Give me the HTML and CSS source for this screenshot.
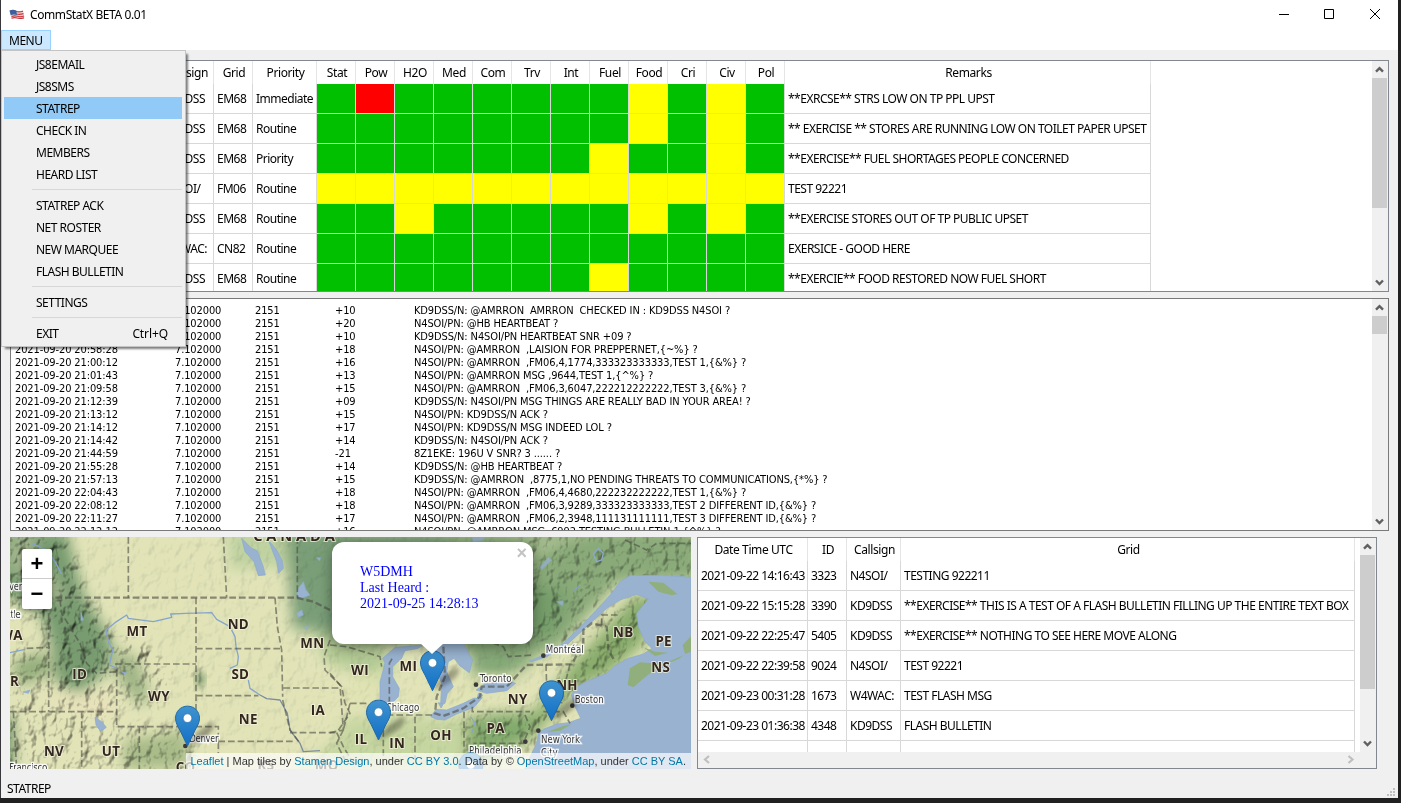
FILE: index.html
```html
<!DOCTYPE html>
<html lang="en">
<head>
<meta charset="utf-8">
<title>CommStatX BETA 0.01</title>
<link rel="stylesheet" href="styles.css">
</head>
<body>
<svg width="0" height="0" class="defs" aria-hidden="true">
  <defs>
    <symbol id="up" viewBox="0 0 17 17"><path d="M5 10.700 8.500 7.200l3.500 3.500" fill="none" stroke="currentColor" stroke-width="2.400"/></symbol>
    <symbol id="down" viewBox="0 0 17 17"><path d="M5 6.500 8.500 10 12 6.500" fill="none" stroke="currentColor" stroke-width="2.400"/></symbol>
    <symbol id="left" viewBox="0 0 17 17"><path d="M11 4 7 7.500 11 11" fill="none" stroke="currentColor" stroke-width="2.200"/></symbol>
    <symbol id="right" viewBox="0 0 17 17"><path d="M6.500 4l4 3.500-4 3.500" fill="none" stroke="currentColor" stroke-width="2.200"/></symbol>
  </defs>
</svg>
<div class="window">
  <header class="titlebar">
    <svg class="flag" viewBox="0 0 16 12" width="16" height="12">
      <path d="M.5 1.500Q4 .2 7.500 1.500T14 1l1.500 7.500Q12 10 8.500 9T2.500 9.500Z" fill="#ecd6d6"/>
      <path d="M7 2.500q3 1 7-.3M7.500 5q3 .8 7-.3M2.500 7.500q3-1.200 6-.2t6.500-.3M2.500 9.200q3-1 5.500-.2t7-.2" stroke="#c8363a" stroke-width="1.200" fill="none"/>
      <path d="M.5 1.500Q4 .2 7.300 1.500L8 6Q4.500 5 1.700 6.200Z" fill="#3e5f9c"/>
    </svg>
    <span class="title">CommStatX BETA 0.01</span>
    <svg class="winbtns" width="120" height="30" viewBox="0 0 120 30" fill="none" stroke="#000">
      <path d="M9 14.500h10M54.500 9.500h9v9h-9zM100 9l10 10M110 9l-10 10"/>
    </svg>
  </header>
  <nav class="menubar"><span class="menutab">MENU</span>
    <div class="menu">
      <div class="item">JS8EMAIL</div><div class="item">JS8SMS</div><div class="item on">STATREP</div><div class="item">CHECK IN</div><div class="item">MEMBERS</div><div class="item">HEARD LIST</div>
      <hr>
      <div class="item">STATREP ACK</div><div class="item">NET ROSTER</div><div class="item">NEW MARQUEE</div><div class="item">FLASH BULLETIN</div>
      <hr>
      <div class="item">SETTINGS</div>
      <hr>
      <div class="item"><span>EXIT</span><span class="key">Ctrl+Q</span></div>
    </div>
  </nav>
  <main class="body">
    <section class="panel status">
      <div class="view">
        <table class="grid statgrid">
          <colgroup><col class="c110"><col class="c39"><col class="c54"><col class="c39"><col class="c64"><col class="c39" span="12"><col class="c366"></colgroup>
          <thead><tr><th></th><th></th><th>Callsign</th><th>Grid</th><th>Priority</th><th>Stat</th><th>Pow</th><th>H2O</th><th>Med</th><th>Com</th><th>Trv</th><th>Int</th><th>Fuel</th><th>Food</th><th>Cri</th><th>Civ</th><th>Pol</th><th>Remarks</th></tr></thead>
          <tbody>
          <tr><td></td><td></td><td>KD9DSS</td><td>EM68</td><td>Immediate</td><td class="g"></td><td class="r"></td><td class="g"></td><td class="g"></td><td class="g"></td><td class="g"></td><td class="g"></td><td class="g"></td><td class="y"></td><td class="g"></td><td class="y"></td><td class="g"></td><td>**EXRCSE** STRS LOW ON TP PPL UPST</td></tr>
          <tr><td></td><td></td><td>KD9DSS</td><td>EM68</td><td>Routine</td><td class="g"></td><td class="g"></td><td class="g"></td><td class="g"></td><td class="g"></td><td class="g"></td><td class="g"></td><td class="g"></td><td class="y"></td><td class="g"></td><td class="y"></td><td class="g"></td><td>** EXERCISE ** STORES ARE RUNNING LOW ON TOILET PAPER UPSET</td></tr>
          <tr><td></td><td></td><td>KD9DSS</td><td>EM68</td><td>Priority</td><td class="g"></td><td class="g"></td><td class="g"></td><td class="g"></td><td class="g"></td><td class="g"></td><td class="g"></td><td class="y"></td><td class="g"></td><td class="g"></td><td class="y"></td><td class="g"></td><td>**EXERCISE** FUEL SHORTAGES PEOPLE CONCERNED</td></tr>
          <tr><td></td><td></td><td>N4SOI/</td><td>FM06</td><td>Routine</td><td class="y"></td><td class="y"></td><td class="y"></td><td class="y"></td><td class="y"></td><td class="y"></td><td class="y"></td><td class="y"></td><td class="y"></td><td class="y"></td><td class="y"></td><td class="y"></td><td>TEST 92221</td></tr>
          <tr><td></td><td></td><td>KD9DSS</td><td>EM68</td><td>Routine</td><td class="g"></td><td class="g"></td><td class="y"></td><td class="g"></td><td class="g"></td><td class="g"></td><td class="g"></td><td class="g"></td><td class="y"></td><td class="g"></td><td class="y"></td><td class="g"></td><td>**EXERCISE STORES OUT OF TP PUBLIC UPSET</td></tr>
          <tr><td></td><td></td><td>W4WAC:</td><td>CN82</td><td>Routine</td><td class="g"></td><td class="g"></td><td class="g"></td><td class="g"></td><td class="g"></td><td class="g"></td><td class="g"></td><td class="g"></td><td class="g"></td><td class="g"></td><td class="g"></td><td class="g"></td><td>EXERSICE - GOOD HERE</td></tr>
          <tr><td></td><td></td><td>KD9DSS</td><td>EM68</td><td>Routine</td><td class="g"></td><td class="g"></td><td class="g"></td><td class="g"></td><td class="g"></td><td class="g"></td><td class="g"></td><td class="y"></td><td class="g"></td><td class="g"></td><td class="g"></td><td class="g"></td><td>**EXERCIE** FOOD RESTORED NOW FUEL SHORT</td></tr>
          </tbody>
        </table>
      </div>
      <div class="vbar"><svg><use href="#up"/></svg><div class="track"><div class="thumb t1"></div></div><svg><use href="#down"/></svg></div>
    </section>

    <section class="panel log">
      <div class="view">
        <div class="lines">
          <div class="line"><span></span><span>7.102000</span><span>2151</span><span>+10</span><span>KD9DSS/N: @AMRRON  AMRRON  CHECKED IN : KD9DSS N4SOI ?</span></div>
          <div class="line"><span></span><span>7.102000</span><span>2151</span><span>+20</span><span>N4SOI/PN: @HB HEARTBEAT ?</span></div>
          <div class="line"><span></span><span>7.102000</span><span>2151</span><span>+10</span><span>KD9DSS/N: N4SOI/PN HEARTBEAT SNR +09 ?</span></div>
          <div class="line"><span>2021-09-20 20:58:28</span><span>7.102000</span><span>2151</span><span>+18</span><span>N4SOI/PN: @AMRRON  ,LAISION FOR PREPPERNET,{~%} ?</span></div>
          <div class="line"><span>2021-09-20 21:00:12</span><span>7.102000</span><span>2151</span><span>+16</span><span>N4SOI/PN: @AMRRON  ,FM06,4,1774,333323333333,TEST 1,{&amp;%} ?</span></div>
          <div class="line"><span>2021-09-20 21:01:43</span><span>7.102000</span><span>2151</span><span>+13</span><span>N4SOI/PN: @AMRRON MSG ,9644,TEST 1,{^%} ?</span></div>
          <div class="line"><span>2021-09-20 21:09:58</span><span>7.102000</span><span>2151</span><span>+15</span><span>N4SOI/PN: @AMRRON  ,FM06,3,6047,222212222222,TEST 3,{&amp;%} ?</span></div>
          <div class="line"><span>2021-09-20 21:12:39</span><span>7.102000</span><span>2151</span><span>+09</span><span>KD9DSS/N: N4SOI/PN MSG THINGS ARE REALLY BAD IN YOUR AREA! ?</span></div>
          <div class="line"><span>2021-09-20 21:13:12</span><span>7.102000</span><span>2151</span><span>+15</span><span>N4SOI/PN: KD9DSS/N ACK ?</span></div>
          <div class="line"><span>2021-09-20 21:14:12</span><span>7.102000</span><span>2151</span><span>+17</span><span>N4SOI/PN: KD9DSS/N MSG INDEED LOL ?</span></div>
          <div class="line"><span>2021-09-20 21:14:42</span><span>7.102000</span><span>2151</span><span>+14</span><span>KD9DSS/N: N4SOI/PN ACK ?</span></div>
          <div class="line"><span>2021-09-20 21:44:59</span><span>7.102000</span><span>2151</span><span>-21</span><span>8Z1EKE: 196U V SNR? 3 ...... ?</span></div>
          <div class="line"><span>2021-09-20 21:55:28</span><span>7.102000</span><span>2151</span><span>+14</span><span>KD9DSS/N: @HB HEARTBEAT ?</span></div>
          <div class="line"><span>2021-09-20 21:57:13</span><span>7.102000</span><span>2151</span><span>+15</span><span>KD9DSS/N: @AMRRON  ,8775,1,NO PENDING THREATS TO COMMUNICATIONS,{*%} ?</span></div>
          <div class="line"><span>2021-09-20 22:04:43</span><span>7.102000</span><span>2151</span><span>+18</span><span>N4SOI/PN: @AMRRON  ,FM06,4,4680,222232222222,TEST 1,{&amp;%} ?</span></div>
          <div class="line"><span>2021-09-20 22:08:12</span><span>7.102000</span><span>2151</span><span>+18</span><span>N4SOI/PN: @AMRRON  ,FM06,3,9289,333323333333,TEST 2 DIFFERENT ID,{&amp;%} ?</span></div>
          <div class="line"><span>2021-09-20 22:11:27</span><span>7.102000</span><span>2151</span><span>+17</span><span>N4SOI/PN: @AMRRON  ,FM06,2,3948,111131111111,TEST 3 DIFFERENT ID,{&amp;%} ?</span></div>
          <div class="line"><span>2021-09-20 22:12:12</span><span>7.102000</span><span>2151</span><span>+16</span><span>N4SOI/PN: @AMRRON MSG ,6992,TESTING BULLETIN 1,{^%} ?</span></div>
        </div>
      </div>
      <div class="vbar"><svg><use href="#up"/></svg><div class="track"><div class="thumb t2"></div></div><svg><use href="#down"/></svg></div>
    </section>

    <div class="bottom">
      <section class="map">
        <svg class="tiles" width="681" height="232" viewBox="30 21 2043 696" preserveAspectRatio="none">
          <defs>
            <filter id="b12" x="-30%" y="-30%" width="160%" height="160%"><feGaussianBlur stdDeviation="12"/></filter>
            <filter id="b25" x="-30%" y="-30%" width="160%" height="160%"><feGaussianBlur stdDeviation="20"/></filter>
            <filter id="relief" x="0" y="0" width="100%" height="100%" color-interpolation-filters="sRGB">
              <feTurbulence type="fractalNoise" baseFrequency=".03 .022" numOctaves="3" seed="8" result="n"/>
              <feColorMatrix in="n" type="matrix" values="0 0 0 0 0 0 0 0 0 0 0 0 0 0 0 1 0 0 0 0"/>
              <feDiffuseLighting surfaceScale="11" diffuseConstant="1.250" lighting-color="#fff"><feDistantLight azimuth="225" elevation="55"/></feDiffuseLighting>
            </filter>
            <mask id="hills">
              <g filter="url(#b12)">
                <rect x="0" y="0" width="2100" height="740" fill="#202020"/>
                <path d="M30 21H170L240 120 240 190 300 260 340 340 420 340 500 420 500 500 420 540 350 480 180 490 150 330 110 270 30 230Z" fill="#fff"/>
                <path d="M30 350 150 350 170 470 350 500 350 717H30Z" fill="#ccc"/>
                <path d="M350 590 560 590 600 717H350ZM350 400 500 420 440 540 350 500Z" fill="#ccc"/>
                <path d="M580 420 620 430 610 470 580 460Z" fill="#999"/>
                <path d="M1580 21H2073V140L1860 150 1700 360 1540 340Z" fill="#aaa"/>
                <path d="M1400 560 1600 545 1700 400 1830 240 1950 200 1930 340 1730 480 1600 640 1400 717Z" fill="#bbb"/>
              </g>
            </mask>
            <linearGradient id="pin" x2="0" y2="1"><stop stop-color="#3f93cf"/><stop offset="1" stop-color="#126fc6"/></linearGradient>
            <g id="marker">
              <path d="M37 118C48 95 80 62 112 50Q125 62 104 84 75 108 37 120Z" fill="#000" opacity=".3" filter="url(#b6)"/>
              <path d="M37.500 1.500C17 1.500 1.500 17 1.500 38 1.500 51 8 61 15 74L37.500 121 60 74C67 61 73.500 51 73.500 38 73.500 17 58 1.500 37.500 1.500Z" fill="url(#pin)" stroke="#2269a5" stroke-width="3"/>
              <circle cx="37.500" cy="37.500" r="13" fill="#fff" stroke="#2269a5" stroke-width="2"/>
            </g>
            <filter id="b6"><feGaussianBlur stdDeviation="6"/></filter>
          </defs>
          <rect x="30" y="21" width="2043" height="696" fill="#e2e4b8"/>
          <g filter="url(#b25)">
            <path d="M0 0H200L230 120 255 200 305 280 340 350 325 420 240 490 170 460 150 330 120 250 0 190Z" fill="#789b70"/>
            <path d="M30 21 90 21 200 200 150 220 30 110Z" fill="#a5b890"/>
            <path d="M30 400 130 360 160 430 60 470Z" fill="#94ad7c"/>
            <path d="M0 560H40V717H0Z" fill="#64895e"/>
            <path d="M120 500H340V560L220 540Z" fill="#e8e1ba"/>
            <path d="M350 360 410 380 450 500 420 530 350 440Z" fill="#9db384"/>
            <path d="M370 630 560 600 570 717H370Z" fill="#a8bb88"/>
            <path d="M680 0 900 0 900 120 800 110 690 120Z" fill="#bfd2a0"/>
            <path d="M855 0H1400V330L1100 340 930 300 880 300Z" fill="#7a9f78"/>
            <path d="M940 310 1120 330 1190 400 1140 470 1060 420 980 400Z" fill="#b3ca94"/>
            <path d="M1040 560 1400 560 1400 717H870L1000 640Z" fill="#c6d6a0"/>
            <path d="M1350 0H2100V150L1850 160 1680 350 1560 400 1350 340Z" fill="#8aaa79"/>
            <path d="M1560 160 1700 180 1680 300 1580 340Z" fill="#769d6b"/>
            <path d="M1400 560 1600 550 1720 400 1900 200 1980 200 1930 340 1830 430 1720 480 1620 600 1530 660 1400 717Z" fill="#88ac6c"/>
            <path d="M1400 350H1510L1600 400 1520 450 1430 470Z" fill="#86a978"/>
            <path d="M1480 550 1600 545 1590 640 1450 660 1410 600Z" fill="#83aa6d"/>
          </g>
          <ellipse cx="600" cy="448" rx="13" ry="22" fill="#64885d" filter="url(#b12)"/>
          <path d="M1480 21 1620 50 1540 120 1700 40 1790 21Z" fill="#bccba0" opacity=".5" filter="url(#b12)"/>
          <path d="M1300 500 1350 490 1440 430 1500 440 1440 500 1330 530ZM1160 400 1130 500 1070 540 1000 500Z" fill="#e0e3b2" opacity=".8" filter="url(#b12)"/>
          <path d="M1440 440 1530 430 1640 390 1720 345 1700 385 1590 405 1520 455 1440 460Z" fill="#dfe3b2" opacity=".7" filter="url(#b12)"/>
          <g mask="url(#hills)" class="shade"><rect x="30" y="21" width="2043" height="696" filter="url(#relief)"/></g>

          <g fill="#99b2cf" stroke="#8aaace" stroke-width="2">
            <path d="M725 25 755 55 772 62 790 110 796 135 775 137 762 95 735 65ZM805 30 830 60 846 90 850 115 836 130 830 95ZM285 562 305 575 319 592 302 604 288 585ZM895 175 910 155 918 180 930 195 905 205 890 198ZM890 250 905 240 910 255 895 262Z"/>
            <path d="M243 248 250 270 243 272ZM365 425 380 428 375 434ZM950 83 962 84 958 92ZM70 486 90 480 85 490ZM912 292 925 290 920 300Z"/>
          </g>
          <g transform="translate(990 0)" fill="#99b2cf" stroke="#8aaace" stroke-width="2">
            <path d="M150 510 150 455 165 400 158 385 195 352 280 345 262 356 225 362 215 385 188 410 188 440 208 475 205 500 188 517 165 520Z"/>
            <path d="M318 340H400L428 390 418 428 390 408 372 385 355 395 350 425 370 470 352 490 345 520 332 522 335 460 310 395Z"/>
            <path d="M302 560 318 538 350 540 400 520 430 505 457 503 432 532 380 552 345 570 320 568ZM438 480 465 462 530 452 557 460 530 482 470 490ZM445 490 458 495 452 505 443 500ZM325 518 340 522 333 534Z"/>
            <path d="M1083 142 1000 136 900 137 870 155 845 190 790 250 752 290 700 340 640 375 600 392 602 396 650 380 710 345 770 290 830 235 870 210 920 193 955 208 920 250 925 290 945 335 965 355 940 372 895 385 850 410 830 430 780 450 740 470 724 495 735 530 752 565 715 578 680 582 640 598 625 610 620 640 600 680 585 717H1083Z"/>
            <path d="M425 21 468 21 455 32 430 35ZM680 215 700 212 698 228ZM630 110 655 82 665 90 635 120Z" opacity=".8"/>
            <path d="M805 55 820 70 815 90 800 95 790 72Z" fill="none" stroke-width="4"/>
          </g>
          <g transform="translate(990 0)" fill="#91af7c">
            <path d="M893 465 900 415 930 397 1000 402 1060 376 1045 388 985 410 935 450 910 472ZM955 155 1000 158 1042 192 1025 196 985 185ZM650 606 700 588 725 583 690 602ZM1058 345 1083 318V365L1065 372ZM940 352 975 365 1015 368 975 378Z"/>
          </g>
          <g fill="none" stroke="#85a5cd" stroke-width="4" stroke-linejoin="round">
            <path d="M350 415 328 405 338 360 325 335 318 300 345 278 380 255 385 265 460 275 515 262 512 252 560 250 635 248 650 268 690 290 705 320 708 350 715 380 712 405 690 415M745 450 750 475 780 495"/>
            <path d="M95 40 140 60 165 95 185 132M30 368 75 358" />
            <path d="M780 495 800 506 840 510 862 550 870 600 900 640 910 665 960 662" stroke="#7d8da0"/>
            <path d="M1415 610 1425 580 1412 560M1720 184 1740 165 1755 180" stroke-width="3"/>
          </g>
          <g class="borders">
            <path d="M50 203H890L940 215 990 240" stroke-width="7"/>
            <path d="M385 21V203M670 21 680 203M892 21V203M146 250V545M588 203V540M825 203 832 290 845 360 848 500M588 356H845M345 402H588M588 497H775M30 545H350M350 420V590H655V670M418 590V717M245 545V717M655 634H885M850 474H1025M870 608H1010M180 210 185 250 240 340 260 400 290 430 350 425M80 355 150 352M40 545 50 717M990 330 972 380 975 420 1025 470 1035 520 1050 550 1010 608 1030 650 1060 700M848 510 870 600 900 640"/>
            <g transform="translate(990 0)">
              <path d="M340 350 345 440 320 500 315 550 340 558 400 535 450 500 455 470 530 470 590 405 725 403 760 340V300L785 280 830 290 835 360 855 395" stroke-width="7"/>
              <path d="M255 560V690M402 545V650M427 530V545H600M60 520H110M170 555H310M160 600V717M648 403 650 470M720 403 700 480 695 520M640 545H700L720 580M585 555 600 590 580 640H430M815 285V255H870M885 30 950 60 980 40H1083M460 330 520 350 535 380 610 375M0 430 30 465 40 600 0 608M0 345 50 350 150 380 155 410M178 520V400L190 380M40 600 20 640 45 690M60 520 40 600"/>
            </g>
          </g>
          <g class="states">
            <text x="882" y="34" class="country" textLength="245">CANADA</text>
            <text x="411" y="318">MT</text><text x="715" y="298">ND</text><text x="937" y="353">MN</text><text x="239" y="447">ID</text><text x="721" y="446">SD</text><text x="477" y="513">WY</text><text x="745" y="582">NE</text><text x="954" y="555">IA</text><text x="162" y="679">NV</text><text x="333" y="679">UT</text><text x="557" y="727">CO</text><text x="798" y="720">KS</text><text x="980" y="720">MO</text><text x="34" y="329">WA</text><text x="27" y="468">OR</text>
            <text x="1080" y="434">WI</text><text x="1225" y="423">MI</text><text x="1083" y="641">IL</text><text x="1192" y="653">IN</text><text x="1323" y="631">OH</text><text x="1487" y="609">PA</text><text x="1553" y="522">NY</text><text x="1701" y="480">NH</text><text x="1870" y="321">NB</text><text x="1991" y="347">PE</text><text x="1982" y="425">NS</text>
          </g>
          <g class="cities">
            <text x="568" y="637" textLength="88">Denver</text><text x="-60" y="181" textLength="127">Vancouver</text><text x="-22" y="264" textLength="84">Seattle</text><text x="-26" y="722" textLength="168">San Francisco</text>
            <text x="1158" y="542" textLength="100">Chicago</text><text x="1439" y="455" textLength="96">Toronto</text><text x="1637" y="369" textLength="114">Montréal</text><text x="1724" y="518" textLength="87">Boston</text><text x="1623" y="639" textLength="117">New York</text><text x="1623" y="678" textLength="50">City</text><text x="1407" y="672" textLength="158">Philadelphia</text>
          </g>
          <g fill="#3a3a3a"><circle cx="556" cy="648" r="7"/><circle cx="1428" cy="464" r="7"/><circle cx="1630" cy="377" r="7"/><circle cx="1717" cy="527" r="7"/><circle cx="1615" cy="602" r="7"/><circle cx="1576" cy="635" r="7"/></g>
          <use href="#marker" x="525" y="527"/><use href="#marker" x="1098" y="509"/><use href="#marker" x="1260" y="361"/><use href="#marker" x="1617" y="451"/><use href="#marker" x="1375" y="667"/>
        </svg>
        <div class="zoomer"><div>+</div><div>−</div></div>
        <div class="popup"><span class="close">×</span>W5DMH<br>Last Heard :<br>2021-09-25 14:28:13<svg class="tip" width="24" height="12" viewBox="0 0 24 12"><path d="M0 0H24L12 11Z" fill="#fff"/></svg></div>
        <div class="credit"><a>Leaflet</a> | Map tiles by <a>Stamen Design</a>, under <a>CC BY 3.0</a>. Data by © <a>OpenStreetMap</a>, under <a>CC BY SA</a>.</div>
      </section>

      <section class="panel bulletins">
        <div class="upper">
          <div class="view">
            <table class="grid bullgrid">
              <colgroup><col class="c110"><col class="c39"><col class="c54"><col class="c454"></colgroup>
              <thead><tr><th>Date Time UTC</th><th>ID</th><th>Callsign</th><th>Grid</th></tr></thead>
              <tbody>
              <tr><td>2021-09-22 14:16:43</td><td>3323</td><td>N4SOI/</td><td>TESTING 922211</td></tr>
              <tr><td>2021-09-22 15:15:28</td><td>3390</td><td>KD9DSS</td><td>**EXERCISE** THIS IS A TEST OF A FLASH BULLETIN FILLING UP THE ENTIRE TEXT BOX</td></tr>
              <tr><td>2021-09-22 22:25:47</td><td>5405</td><td>KD9DSS</td><td>**EXERCISE** NOTHING TO SEE HERE MOVE ALONG</td></tr>
              <tr><td>2021-09-22 22:39:58</td><td>9024</td><td>N4SOI/</td><td>TEST 92221</td></tr>
              <tr><td>2021-09-23 00:31:28</td><td>1673</td><td>W4WAC:</td><td>TEST FLASH MSG</td></tr>
              <tr><td>2021-09-23 01:36:38</td><td>4348</td><td>KD9DSS</td><td>FLASH BULLETIN</td></tr>
              <tr><td></td><td></td><td></td><td></td></tr>
              </tbody>
            </table>
          </div>
          <div class="vbar"><svg><use href="#up"/></svg><div class="track"><div class="thumb t3"></div></div><svg><use href="#down"/></svg></div>
        </div>
        <div class="hbar"><svg><use href="#left"/></svg><svg><use href="#right"/></svg></div>
      </section>
    </div>
  </main>
  <footer class="statusbar"><span>STATREP</span>
    <svg width="9" height="9" viewBox="0 0 9 9" fill="#bfbfbf"><path d="M6 0h2v2H6zM3 3h2v2H3zM6 3h2v2H6zM0 6h2v2H0zM3 6h2v2H3zM6 6h2v2H6z"/></svg>
  </footer>
</div>
</body>
</html>
```
FILE: styles.css
```css
* { box-sizing: border-box; }
html, body { margin: 0; height: 100%; overflow: hidden; }
body { background: #202020; font: 12px/16px "Noto Sans", "Open Sans", sans-serif; letter-spacing: -0.5px; color: #000; }
.defs { position: absolute; }
.window { width: 1398px; height: 798px; display: flex; flex-direction: column; background: #f0f0f0; border-left: 1px solid #38383c; }

.titlebar { height: 30px; flex: none; background: #fff; display: flex; align-items: center; padding-left: 8px; }
.flag { margin-right: 5px; }
.title { flex: 1; letter-spacing: -0.4px; }
.winbtns { margin-right: 8px; }
.menubar { position: relative; height: 20px; flex: none; background: #fff; }
.menutab { display: block; width: 50px; height: 20px; border: 1px solid #99d1ff; background: #cce8ff; padding-left: 7px; line-height: 19px; }
.menu { position: absolute; z-index: 10; left: 0; top: 20px; width: 185px; height: 297px; padding: 2px; background: #f0f0f0; border: 1px solid #c4c4c4; box-shadow: 3px 3px 2px -1px rgba(0,0,0,.5); }
.item { height: 22px; line-height: 24px; padding: 0 14px 0 32px; margin: 0 1px 0 0; display: flex; justify-content: space-between; }
.item.on { background: #91c9f7; }
.key { letter-spacing: -0.1px; }
.menu hr { height: 1px; margin: 4px 1px 4px 28px; border: 0; background: #d7d7d7; }

.body { flex: 1; display: flex; flex-direction: column; padding: 10px 9px 0; }
.panel { background: #fff; border: 1px solid #828790; display: flex; overflow: hidden; }
.status { height: 232px; margin-bottom: 6px; flex: none; }
.log { height: 233px; margin-bottom: 6px; flex: none; border-color: #7a7a7a; }
.view { flex: 1; min-width: 0; overflow: hidden; }
.vbar { width: 16px; flex: none; background: #f0f0f0; display: flex; flex-direction: column; color: #606060; }
.vbar svg, .hbar svg { width: 17px; height: 17px; flex: none; display: block; }
.vbar svg { margin-left: -1px; }
.track { flex: 1; }
.thumb { width: 15px; background: #cdcdcd; }
.t1 { height: 130px; }
.t2 { height: 18px; }
.t3 { height: 134px; }

.grid { table-layout: fixed; border-collapse: separate; border-spacing: 0; }
.statgrid { width: 1140px; }
.bullgrid { width: 657px; }
.c39 { width: 39px; } .c54 { width: 54px; } .c64 { width: 64px; } .c110 { width: 110px; } .c366 { width: 366px; } .c454 { width: 454px; }
.grid th, .grid td { padding: 0; white-space: nowrap; overflow: hidden; }
.grid th { height: 23px; font-weight: normal; text-align: center; border-right: 1px solid #e5e5e5; padding-left: 2px; letter-spacing: -0.4px; }
.grid td { height: 30px; padding-left: 3px; border-right: 1px solid #d8d8d8; border-bottom: 1px solid #d8d8d8; }
.grid .g { background: #00c000; }
.grid .y { background: #ff0; }
.grid .r { background: #f00; }

.lines { padding: 5px 0 0 4px; font: 11px/13px "DejaVu Sans Condensed", "DejaVu Sans", sans-serif; letter-spacing: -0.12px; }
.line { display: grid; grid-template-columns: 160px 80px 80px 79px 1fr; height: 13px; }
.line span { white-space: pre; }

.bottom { display: flex; gap: 6px; height: 232px; }
.map { position: relative; width: 681px; flex: none; overflow: hidden; letter-spacing: 0; }
.tiles { display: block; }
.shade { mix-blend-mode: multiply; }
.borders { fill: none; stroke: #4d4d45; stroke-opacity: .6; stroke-width: 5; stroke-dasharray: 20 9; }
.states { font: bold 40px "Open Sans", "Noto Sans", sans-serif; text-anchor: middle; fill: #33261f; stroke: #f3f3dc; stroke-width: 6px; stroke-opacity: .75; paint-order: stroke; letter-spacing: 1px; }
.states .country { font-size: 44px; letter-spacing: 0; }
.cities { fill: #333; stroke: #fff; stroke-width: 8px; stroke-opacity: .85; paint-order: stroke; }
.cities text { font-family: "DejaVu Sans Condensed", "Open Sans", sans-serif; font-size: 29px; }
.zoomer { position: absolute; left: 12px; top: 12px; width: 30px; height: 60px; border-radius: 2px; background: #fff; font: bold 22px/30px "Liberation Sans", sans-serif; text-align: center; box-shadow: 0 1px 5px rgba(0,0,0,.4); }
.zoomer div { height: 30px; }
.zoomer div:first-child { border-bottom: 1px solid #ccc; }
.popup { position: absolute; left: 322px; top: 5px; width: 201px; height: 102px; border-radius: 12px; background: #fff; padding: 22px 28px; font: 14px/16px "Liberation Serif", serif; color: #00f; box-shadow: 0 3px 14px rgba(0,0,0,.4); }
.popup .close { position: absolute; right: 6px; top: 4px; font: bold 18px/15px "Liberation Sans", sans-serif; color: #c3c3c3; }
.popup .tip { position: absolute; left: 88px; top: 101px; }
.credit { position: absolute; right: 0; bottom: 0; height: 16px; padding: 0 5px; background: rgba(255,255,255,.7); font: 11px/16px "Liberation Sans", sans-serif; color: #333; white-space: nowrap; }
.credit a { color: #0078a8; }

.bulletins { width: 680px; flex: none; flex-direction: column; }
.upper { height: 214px; display: flex; }
.hbar { flex: 1; background: #f0f0f0; display: flex; justify-content: space-between; padding-right: 17px; color: #bfbfbf; }

.statusbar { height: 20px; flex: none; display: flex; align-items: center; padding: 1px 2px 0 6px; justify-content: space-between; }
.statusbar svg { align-self: flex-end; margin-bottom: 1px; }
```
